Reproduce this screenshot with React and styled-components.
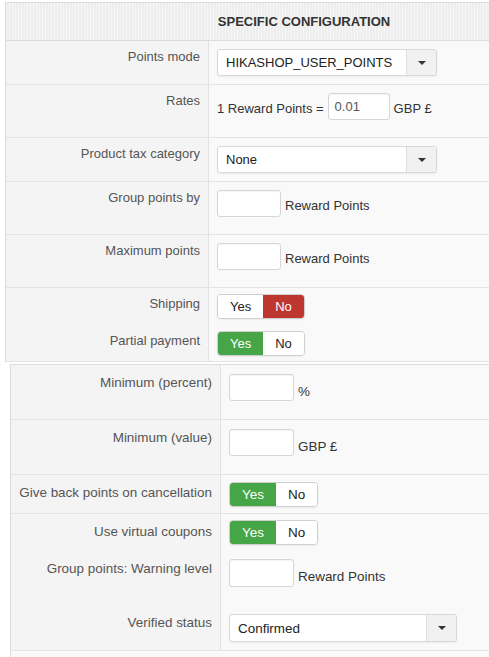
import styled, { createGlobalStyle } from 'styled-components';

const GlobalStyle = createGlobalStyle`
  html, body {
    margin: 0;
    padding: 0;
    background: #ffffff;
    overflow: hidden;
  }
  body {
    font-family: "Liberation Sans", Arial, sans-serif;
    font-size: 13px;
    color: #333;
  }
`;

const Page = styled.div`
  padding: 2px 0 0 ${({ $left }) => $left}px;
`;

const Panel = styled.div`
  width: ${({ $width }) => $width}px;
  margin-left: ${({ $shift }) => $shift || 0}px;
  margin-top: ${({ $top }) => $top || 0}px;
  font-size: ${({ $fs }) => $fs || 13}px;
  border: 1px solid #dcdcdc;
  border-right: none;
  border-bottom: none;
  background: #f9f9f9;
  display: flex;
  flex-direction: column;
`;

const Header = styled.div`
  height: 38px;
  box-sizing: border-box;
  border-bottom: 1px solid #dcdcdc;
  display: flex;
  align-items: center;
  justify-content: center;
  font-weight: bold;
  font-size: 13px;
  color: #333;
  background-color: #eeeeee;
  background-image: repeating-linear-gradient(
    90deg,
    rgba(255, 255, 255, 0.45) 0 1px,
    transparent 1px 3px
  );
`;

const Row = styled.div`
  display: flex;
  border-bottom: ${({ $noBorder }) => ($noBorder ? 'none' : '1px solid #e3e3e3')};
`;

const Label = styled.div`
  width: ${({ $width }) => $width}px;
  flex: none;
  box-sizing: border-box;
  background: #f4f4f4;
  border-right: 1px solid #e1e1e1;
  padding: ${({ $top }) => $top}px 8px 0 0;
  text-align: right;
  line-height: 16px;
  color: #555;
  white-space: nowrap;
`;

const Value = styled.div`
  flex: 1;
  padding: ${({ $pt }) => $pt}px 8px ${({ $pb }) => $pb}px 8px;
  display: flex;
  align-items: flex-start;
`;

const Field = styled.div`
  display: flex;
  align-items: flex-start;
  gap: 4px;
  margin-bottom: ${({ $mb }) => $mb || 0}px;
`;

const Unit = styled.span`
  color: #333;
  line-height: 16px;
  margin-top: ${({ $drop }) => $drop}px;
`;

const TextInput = styled.div`
  width: ${({ $w }) => $w || 64}px;
  height: ${({ $h }) => $h || 27}px;
  box-sizing: border-box;
  background: #fff;
  border: 1px solid #d6d6d6;
  border-radius: 3px;
  box-shadow: inset 0 1px 1px rgba(0, 0, 0, 0.04);
  padding: 0 6px;
  display: flex;
  align-items: center;
  color: #555;
`;

const Select = styled.div`
  width: ${({ $w }) => $w}px;
  height: ${({ $h }) => $h || 27}px;
  box-sizing: border-box;
  background: #fff;
  border: 1px solid #d8d8d8;
  border-radius: 3px;
  box-shadow: 0 1px 2px rgba(0, 0, 0, 0.06);
  display: flex;
  overflow: hidden;
`;

const SelectText = styled.div`
  flex: 1;
  padding-left: 8px;
  display: flex;
  align-items: center;
  color: #222;
`;

const Caret = styled.div`
  width: 29px;
  flex: none;
  background: #f1f1f1;
  border-left: 1px solid #dedede;
  display: flex;
  align-items: center;
  justify-content: center;
  &::after {
    content: '';
    border-left: 4px solid transparent;
    border-right: 4px solid transparent;
    border-top: 4px solid #333;
  }
`;

const Toggle = styled.div`
  display: flex;
  height: 25px;
  box-sizing: border-box;
  border: 1px solid #cfcfcf;
  border-radius: 4px;
  overflow: hidden;
  box-shadow: 0 1px 2px rgba(0, 0, 0, 0.06);
`;

const ToggleOption = styled.div`
  padding: 0 12px;
  display: flex;
  align-items: center;
  color: ${({ $on }) => ($on ? '#fff' : '#222')};
  background: ${({ $on, $tone }) =>
    !$on ? '#fff' : $tone === 'no' ? '#bd362f' : '#46a546'};
`;

const SelectBox = ({ value, width, height }) => (
  <Select $w={width} $h={height}>
    <SelectText>{value}</SelectText>
    <Caret />
  </Select>
);

const YesNo = ({ value }) => (
  <Toggle>
    <ToggleOption $on={value === 'yes'} $tone="yes">Yes</ToggleOption>
    <ToggleOption $on={value === 'no'} $tone="no">No</ToggleOption>
  </Toggle>
);

const App = () => (
  <>
    <GlobalStyle />
    <Page $left={5}>
      <Panel $width={596}>
        <Header>SPECIFIC CONFIGURATION</Header>

        <Row>
          <Label $width={203} $top={8}>Points mode</Label>
          <Value $pt={8} $pb={8}>
            <SelectBox value="HIKASHOP_USER_POINTS" width={220} />
          </Value>
        </Row>

        <Row>
          <Label $width={203} $top={8}>Rates</Label>
          <Value $pt={8} $pb={8}>
            <Field $mb={9}>
              <Unit $drop={8}>1 Reward Points =</Unit>
              <TextInput $w={62} $h={27}>0.01</TextInput>
              <Unit $drop={8}>GBP £</Unit>
            </Field>
          </Value>
        </Row>

        <Row>
          <Label $width={203} $top={8}>Product tax category</Label>
          <Value $pt={8} $pb={8}>
            <SelectBox value="None" width={220} />
          </Value>
        </Row>

        <Row>
          <Label $width={203} $top={8}>Group points by</Label>
          <Value $pt={8} $pb={8}>
            <Field $mb={9}>
              <TextInput />
              <Unit $drop={8}>Reward Points</Unit>
            </Field>
          </Value>
        </Row>

        <Row>
          <Label $width={203} $top={8}>Maximum points</Label>
          <Value $pt={8} $pb={8}>
            <Field $mb={9}>
              <TextInput />
              <Unit $drop={8}>Reward Points</Unit>
            </Field>
          </Value>
        </Row>

        <Row $noBorder>
          <Label $width={203} $top={8}>Shipping</Label>
          <Value $pt={6} $pb={6}>
            <YesNo value="no" />
          </Value>
        </Row>

        <Row>
          <Label $width={203} $top={8}>Partial payment</Label>
          <Value $pt={6} $pb={5}>
            <YesNo value="yes" />
          </Value>
        </Row>
      </Panel>

      <Panel $width={600} $shift={5} $top={2} $fs={13.45}>
        <Row>
          <Label $width={210} $top={10}>Minimum (percent)</Label>
          <Value $pt={9} $pb={9}>
            <Field $mb={9}>
              <TextInput $w={65} />
              <Unit $drop={10}>%</Unit>
            </Field>
          </Value>
        </Row>

        <Row>
          <Label $width={210} $top={10}>Minimum (value)</Label>
          <Value $pt={9} $pb={9}>
            <Field $mb={9}>
              <TextInput $w={65} />
              <Unit $drop={10}>GBP £</Unit>
            </Field>
          </Value>
        </Row>

        <Row>
          <Label $width={210} $top={10}>Give back points on cancellation</Label>
          <Value $pt={7} $pb={6}>
            <YesNo value="yes" />
          </Value>
        </Row>

        <Row $noBorder>
          <Label $width={210} $top={10}>Use virtual coupons</Label>
          <Value $pt={6} $pb={6}>
            <YesNo value="yes" />
          </Value>
        </Row>

        <Row $noBorder>
          <Label $width={210} $top={10}>Group points: Warning level</Label>
          <Value $pt={8} $pb={9}>
            <Field $mb={9}>
              <TextInput $w={65} $h={28} />
              <Unit $drop={10}>Reward Points</Unit>
            </Field>
          </Value>
        </Row>

        <Row>
          <Label $width={210} $top={10}>Verified status</Label>
          <Value $pt={9} $pb={8}>
            <SelectBox value="Confirmed" width={228} height={28} />
          </Value>
        </Row>

        <Row $noBorder>
          <Value $pt={10} $pb={0} />
        </Row>
      </Panel>
    </Page>
  </>
);

export default App;
